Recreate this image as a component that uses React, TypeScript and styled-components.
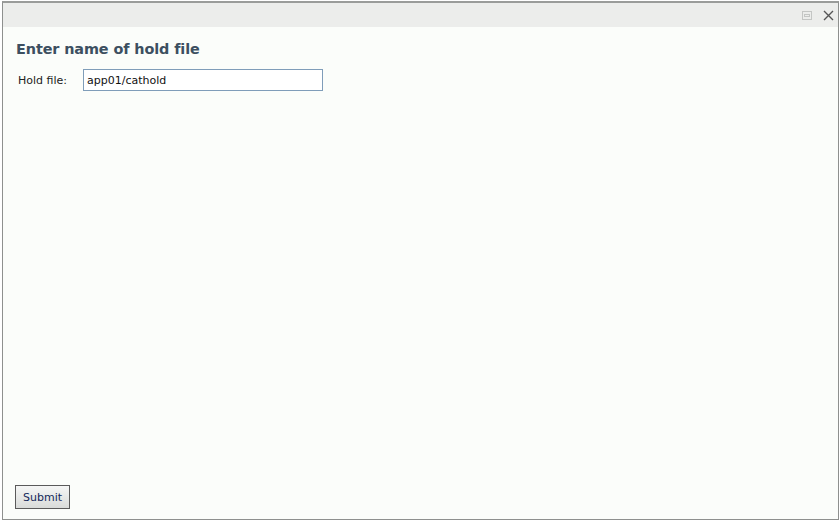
import React from 'react';
import styled, {createGlobalStyle} from "styled-components";

const GlobalStyle = createGlobalStyle`
  html, body {
    margin: 0;
    padding: 0;
    background: #ffffff;
  }
  #root {
    height: 521px;
  }
`

export const App = () => {
    return (
        <>
            <GlobalStyle/>
            <Window>
                <TitleBar>
                    <BarIcon title="restore">
                        <svg width="10" height="9" viewBox="0 0 10 9">
                            <rect x="0.5" y="0.5" width="9" height="8" fill="none" stroke="#c4c6c4"/>
                            <rect x="2.5" y="3.5" width="5" height="2" fill="none" stroke="#c4c6c4"/>
                        </svg>
                    </BarIcon>
                    <BarIcon title="close">
                        <svg width="11" height="11" viewBox="0 0 11 11">
                            <path d="M1 1 L10 10 M10 1 L1 10" stroke="#555" strokeWidth="1.4"/>
                        </svg>
                    </BarIcon>
                </TitleBar>
                <Body>
                    <Heading>Enter name of hold file</Heading>
                    <FieldRow>
                        <Label htmlFor="hold">Hold file:</Label>
                        <TextInput id="hold" defaultValue="app01/cathold"/>
                    </FieldRow>
                    <Footer>
                        <SubmitBtn>Submit</SubmitBtn>
                    </Footer>
                </Body>
            </Window>
        </>
    );
};

const Window = styled.div`
  box-sizing: border-box;
  margin: 1px 0 0 2px;
  width: 837px;
  height: 519px;
  border: 1px solid #8e908e;
  border-top-width: 2px;
  border-top-color: #9a9c9a;
  display: flex;
  flex-direction: column;
  background: #fbfdfa;
  font-family: "DejaVu Sans", Verdana, sans-serif;
`

const TitleBar = styled.div`
  height: 24px;
  background: #ecedeb;
  display: flex;
  align-items: center;
  justify-content: flex-end;
  gap: 9px;
  padding-right: 4px;
`

const BarIcon = styled.span`
  display: flex;
  align-items: center;
  justify-content: center;
  width: 12px;
  height: 12px;
`

const Body = styled.div`
  flex: 1;
  display: flex;
  flex-direction: column;
  padding: 13px 0 10px 12px;
`

const Heading = styled.h1`
  margin: 0 0 0 1px;
  font-size: 14.4px;
  font-weight: bold;
  color: #3c4f60;
  letter-spacing: -0.1px;
  line-height: 18px;
`

const FieldRow = styled.div`
  display: flex;
  align-items: center;
  margin-top: 11px;
  padding-left: 3px;
`

const Label = styled.label`
  width: 65px;
  font-size: 11px;
  color: #222;
`

const TextInput = styled.input`
  box-sizing: border-box;
  width: 240px;
  height: 22px;
  border: 1px solid #7f9db9;
  background: #fff;
  padding: 0 3px;
  font-family: "DejaVu Sans", Verdana, sans-serif;
  font-size: 11px;
  color: #111;
  outline: none;
`

const Footer = styled.div`
  margin-top: auto;
`

const SubmitBtn = styled.button`
  box-sizing: border-box;
  width: 55px;
  height: 24px;
  border: 1px solid #5a5a5a;
  background: linear-gradient(#f5f6f5, #d9dbd9);
  font-family: "DejaVu Sans", Verdana, sans-serif;
  font-size: 11px;
  color: #14285a;
  padding: 0;
`

export default App;
